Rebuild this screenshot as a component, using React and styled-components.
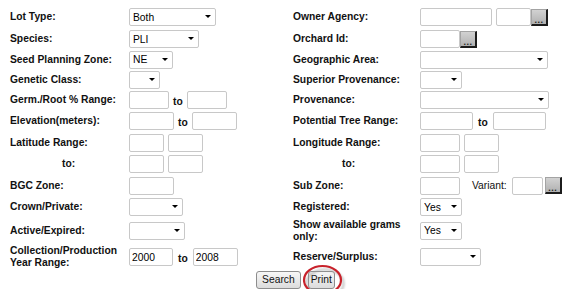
import React from "react";
import styled, { createGlobalStyle } from "styled-components";

const GlobalStyle = createGlobalStyle`
  body {
    margin: 8px;
    background: #fff;
    font-family: "Liberation Sans", Arial, sans-serif;
    font-size: 10.3px;
    color: #111;
  }
`;

const Form = styled.div`
  display: grid;
  grid-template-columns: 119px 164px 127px 1fr;
  grid-template-rows: 22px 20.5px 20px 20px 21.8px 22px 20.7px 21.7px 21.6px 23.4px 26.6px 22.7px;
  align-items: start;
  padding-left: 2px;
`;

const Label = styled.div`
  height: 18px;
  display: flex;
  align-items: center;
  font-weight: bold;
  line-height: 12px;
  padding-left: ${(p) => p.$indent || 0}px;
  white-space: nowrap;
`;

const Cell = styled.div`
  height: 18px;
  display: flex;
  align-items: center;
  flex-shrink: 0;
  gap: ${(p) => (p.$gap === undefined ? 4 : p.$gap)}px;
`;

const To = styled.span`
  font-weight: bold;
  padding-top: 3px;
`;

const Small = styled.span`
  flex-shrink: 0;
  margin-left: 12px;
  margin-right: 5px;
`;

const TextBox = styled.input`
  flex-shrink: 0;
  width: ${(p) => p.$w}px;
  height: 18px;
  box-sizing: border-box;
  border: 1px solid #c8c8c8;
  border-radius: 2px;
  padding: 0 2px;
  margin: 0;
  font: inherit;
  color: #000;
  background: #fff;
  outline: none;
`;

const SelectWrap = styled.span`
  position: relative;
  display: inline-block;
  width: ${(p) => p.$w}px;
  height: 18px;

  &::after {
    content: "";
    position: absolute;
    right: 5px;
    top: 7px;
    border-left: 3px solid transparent;
    border-right: 3px solid transparent;
    border-top: 3.5px solid #000;
    pointer-events: none;
  }
`;

const NativeSelect = styled.select`
  appearance: none;
  width: 100%;
  height: 18px;
  box-sizing: border-box;
  border: 1px solid #c8c8c8;
  border-radius: 2px;
  padding: 0 3px;
  margin: 0;
  font: inherit;
  color: #000;
  background: #fff;
  outline: none;
`;

const Lookup = styled.button`
  flex-shrink: 0;
  width: 17px;
  height: 17px;
  box-sizing: border-box;
  margin: 0;
  padding: 0 0 1px;
  display: flex;
  align-items: flex-end;
  justify-content: center;
  background: linear-gradient(#d2d2d2, #b0b0b0);
  border-style: solid;
  border-width: 1px 2px 2px 1px;
  border-color: #a3a3a3 #1c1c1c #1c1c1c #a3a3a3;
  font-family: "Liberation Sans", Arial, sans-serif;
  font-size: 9px;
  font-weight: bold;
  line-height: 6px;
  letter-spacing: 0.5px;
  color: #222;
`;

const Actions = styled.div`
  display: flex;
  justify-content: center;
  gap: 7px;
  padding-left: 18px;
`;

const Button = styled.button`
  height: 18px;
  margin: 0;
  padding: 0 ${(p) => p.$pad}px;
  box-sizing: border-box;
  font-family: "Liberation Sans", Arial, sans-serif;
  font-size: 10.3px;
  color: #111;
  border: 1px solid #8d8d8d;
  border-radius: 3px;
  background: linear-gradient(#f7f7f7, #dcdcdc);
`;

const Highlight = styled.span`
  position: relative;
  display: inline-flex;
`;

const Ring = styled.svg`
  position: absolute;
  left: -6px;
  top: -7px;
  width: 48px;
  height: 38px;
  pointer-events: none;
  overflow: visible;
`;

const Select = ({ w, value }) => (
  <SelectWrap $w={w}>
    <NativeSelect defaultValue={value || ""}>
      <option value={value || ""}>{value || ""}</option>
    </NativeSelect>
  </SelectWrap>
);

export default function App() {
  return (
    <>
      <GlobalStyle />
      <Form>
        <Label>Lot Type:</Label>
        <Cell><Select w={87} value="Both" /></Cell>
        <Label>Owner Agency:</Label>
        <Cell>
          <TextBox $w={72} />
          <Cell $gap={0}>
            <TextBox $w={35} />
            <Lookup>...</Lookup>
          </Cell>
        </Cell>

        <Label>Species:</Label>
        <Cell><Select w={70} value="PLI" /></Cell>
        <Label>Orchard Id:</Label>
        <Cell $gap={0}>
          <TextBox $w={40} />
          <Lookup>...</Lookup>
        </Cell>

        <Label>Seed Planning Zone:</Label>
        <Cell><Select w={44} value="NE" /></Cell>
        <Label>Geographic Area:</Label>
        <Cell><Select w={128} /></Cell>

        <Label>Genetic Class:</Label>
        <Cell><Select w={31} /></Cell>
        <Label>Superior Provenance:</Label>
        <Cell><Select w={42} /></Cell>

        <Label>Germ./Root % Range:</Label>
        <Cell>
          <TextBox $w={40} />
          <To>to</To>
          <TextBox $w={40} />
        </Cell>
        <Label>Provenance:</Label>
        <Cell><Select w={129} /></Cell>

        <Label>Elevation(meters):</Label>
        <Cell>
          <TextBox $w={45} />
          <To>to</To>
          <TextBox $w={45} />
        </Cell>
        <Label>Potential Tree Range:</Label>
        <Cell $gap={5}>
          <TextBox $w={53} />
          <To>to</To>
          <TextBox $w={53} />
        </Cell>

        <Label>Latitude Range:</Label>
        <Cell>
          <TextBox $w={35} />
          <TextBox $w={35} />
        </Cell>
        <Label>Longitude Range:</Label>
        <Cell>
          <TextBox $w={40} />
          <TextBox $w={35} />
        </Cell>

        <Label $indent={52}>to:</Label>
        <Cell>
          <TextBox $w={35} />
          <TextBox $w={35} />
        </Cell>
        <Label $indent={49}>to:</Label>
        <Cell>
          <TextBox $w={40} />
          <TextBox $w={35} />
        </Cell>

        <Label>BGC Zone:</Label>
        <Cell><TextBox $w={45} /></Cell>
        <Label>Sub Zone:</Label>
        <Cell $gap={0}>
          <TextBox $w={40} />
          <Small>Variant:</Small>
          <Cell $gap={2}>
            <TextBox $w={31} />
            <Lookup>...</Lookup>
          </Cell>
        </Cell>

        <Label>Crown/Private:</Label>
        <Cell><Select w={54} /></Cell>
        <Label>Registered:</Label>
        <Cell><Select w={42} value="Yes" /></Cell>

        <Label>Active/Expired:</Label>
        <Cell><Select w={56} /></Cell>
        <Label>
          Show available grams
          <br />
          only:
        </Label>
        <Cell><Select w={42} value="Yes" /></Cell>

        <Label>
          Collection/Production
          <br />
          Year Range:
        </Label>
        <Cell $gap={5}>
          <TextBox $w={44} defaultValue="2000" />
          <To>to</To>
          <TextBox $w={45} defaultValue="2008" />
        </Cell>
        <Label>Reserve/Surplus:</Label>
        <Cell><Select w={61} /></Cell>
      </Form>

      <Actions>
        <Button $pad={5}>Search</Button>
        <Highlight>
          <Button $pad={2}>Print</Button>
          <Ring viewBox="0 0 48 38">
            <defs>
              <filter id="ringShadow" x="-20%" y="-20%" width="140%" height="140%">
                <feGaussianBlur stdDeviation="1.2" />
              </filter>
            </defs>
            <ellipse cx="23" cy="19.5" rx="18.5" ry="14" fill="none" stroke="#9a9a9a" strokeWidth="2.2" opacity="0.6" filter="url(#ringShadow)" />
            <ellipse cx="20.5" cy="16" rx="18.5" ry="14" fill="none" stroke="#c8222b" strokeWidth="2.2" />
          </Ring>
        </Highlight>
      </Actions>
    </>
  );
}
